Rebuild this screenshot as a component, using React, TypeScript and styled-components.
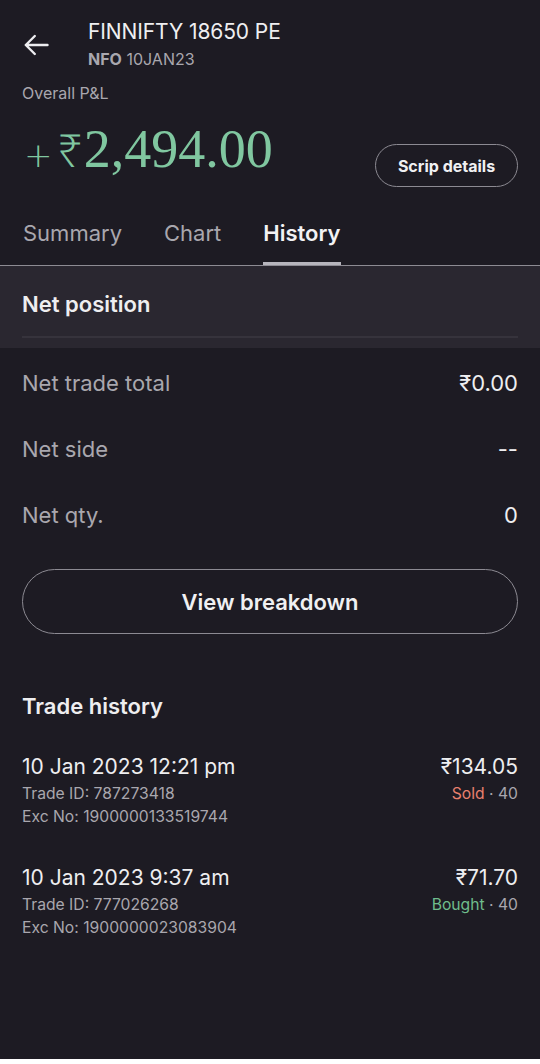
import React from "react";
import styled, { createGlobalStyle } from "styled-components";

const Global = createGlobalStyle`
  html, body { margin: 0; padding: 0; background: #ffffff; }
  * { box-sizing: border-box; }
`;

const Screen = styled.div`
  width: 540px;
  height: 1059px;
  background: #1d1b23;
  font-family: Inter, "Noto Sans", sans-serif;
  color: #ededf0;
  overflow: hidden;
`;

const Header = styled.header`
  display: flex;
  align-items: center;
  padding: 19px 22px 0 24px;
  gap: 39px;
`;

const BackButton = styled.button`
  background: none;
  border: none;
  padding: 0;
  width: 25px;
  height: 22px;
  color: #ededf0;
  display: flex;
  align-items: center;
  margin-top: 2px;
`;

const TitleBlock = styled.div`
  display: flex;
  flex-direction: column;
  gap: 4px;
`;

const Title = styled.div`
  font-size: 21px;
  line-height: 26px;
  color: #efeff1;
  letter-spacing: -0.1px;
`;

const Sub = styled.div`
  font-size: 16px;
  line-height: 20px;
  color: #a9a7ae;
  b { font-weight: 700; }
`;

const Label = styled.div`
  padding: 14px 22px 0;
  font-size: 16px;
  line-height: 20px;
  color: #a9a7ae;
`;

const PnlRow = styled.div`
  display: flex;
  align-items: flex-start;
  justify-content: space-between;
  padding: 13px 22px 0 24px;
`;

const Amount = styled.div`
  font-family: "Liberation Serif", "DejaVu Serif", serif;
  font-size: 54px;
  line-height: 66px;
  color: #80c7a0;
  display: flex;
  align-items: baseline;
`;

const Plus = styled.span`
  font-family: "DejaVu Sans", sans-serif;
  font-weight: 200;
  font-size: 34px;
  margin-right: 5px;
`;

const Rupee = styled.span`
  font-family: "Noto Sans", sans-serif;
  font-weight: 300;
  font-size: 44px;
  margin-right: 1px;
`;

const PillButton = styled.button`
  background: transparent;
  border: 1px solid #8c8a92;
  border-radius: 999px;
  color: #f0f0f2;
  font-family: Inter, "Noto Sans", sans-serif;
  font-weight: 700;
  font-size: 16px;
  height: 43px;
  width: 143px;
  padding: 0;
  margin-top: 28px;
`;

const Tabs = styled.nav`
  display: flex;
  gap: 42px;
  padding: 31px 22px 0 23px;
  border-bottom: 1px solid #8d8b93;
`;

const Tab = styled.div<{ $active?: boolean }>`
  font-size: 22px;
  line-height: 28px;
  font-weight: ${(p) => (p.$active ? 600 : 400)};
  color: ${(p) => (p.$active ? "#f2f2f4" : "#a9a7ae")};
  padding-bottom: 18px;
  position: relative;
  &::after {
    content: "";
    display: ${(p) => (p.$active ? "block" : "none")};
    position: absolute;
    left: 0;
    right: 0;
    bottom: 0;
    height: 3px;
    background: #b7b5bd;
  }
`;

const SectionBand = styled.div`
  background: #2a2730;
  padding: 25px 22px 0;
`;

const BandTitle = styled.div`
  font-size: 22px;
  line-height: 26px;
  font-weight: 600;
  color: #eeeef0;
  padding-bottom: 19px;
  border-bottom: 2px solid #36333c;
`;

const BandSpacer = styled.div`
  height: 10px;
`;

const Rows = styled.div`
  display: flex;
  flex-direction: column;
  padding: 22px 22px 0;
  gap: 40px;
`;

const Row = styled.div`
  display: flex;
  justify-content: space-between;
  align-items: center;
  font-size: 22px;
  line-height: 26px;
`;

const RowLabel = styled.span`
  color: #a9a7ae;
`;

const RowValue = styled.span`
  color: #eeeef0;
`;

const WideButton = styled.button`
  display: block;
  margin: 41px 22px 0;
  width: calc(100% - 44px);
  height: 65px;
  background: transparent;
  border: 1px solid #8c8a92;
  border-radius: 33px;
  color: #f0f0f2;
  font-family: Inter, "Noto Sans", sans-serif;
  font-size: 22px;
  font-weight: 600;
`;

const SectionTitle = styled.div`
  padding: 59px 22px 0;
  font-size: 22px;
  line-height: 26px;
  font-weight: 600;
  color: #eeeef0;
`;

const Trades = styled.div`
  display: flex;
  flex-direction: column;
  gap: 37px;
  padding: 35px 22px 0;
`;

const Trade = styled.div`
  display: flex;
  justify-content: space-between;
`;

const Col = styled.div<{ $right?: boolean }>`
  display: flex;
  flex-direction: column;
  align-items: ${(p) => (p.$right ? "flex-end" : "flex-start")};
`;

const Main = styled.div`
  font-size: 21px;
  line-height: 26px;
  color: #eeeef0;
  margin-bottom: 2px;
`;

const Meta = styled.div`
  font-size: 15.7px;
  line-height: 23px;
  color: #a9a7ae;
`;

const Side = styled.span<{ $kind: "sell" | "buy" }>`
  color: ${(p) => (p.$kind === "sell" ? "#e8806e" : "#6fbd8c")};
`;

const trades = [
  {
    date: "10 Jan 2023 12:21 pm",
    tradeId: "787273418",
    exc: "1900000133519744",
    price: "₹134.05",
    side: "Sold",
    kind: "sell" as const,
    qty: 40,
  },
  {
    date: "10 Jan 2023 9:37 am",
    tradeId: "777026268",
    exc: "1900000023083904",
    price: "₹71.70",
    side: "Bought",
    kind: "buy" as const,
    qty: 40,
  },
];

export default function App() {
  return (
    <>
      <Global />
      <Screen>
        <Header>
          <BackButton aria-label="Back">
            <svg width="25" height="22" viewBox="0 0 25 22" fill="none">
              <path
                d="M23.5 11H1.8M10.8 2L1.8 11L10.8 20"
                stroke="#ededf0"
                strokeWidth="2.4"
                strokeLinecap="round"
                strokeLinejoin="round"
              />
            </svg>
          </BackButton>
          <TitleBlock>
            <Title>FINNIFTY 18650 PE</Title>
            <Sub>
              <b>NFO</b> 10JAN23
            </Sub>
          </TitleBlock>
        </Header>
        <Label>Overall P&amp;L</Label>
        <PnlRow>
          <Amount>
            <Plus>+</Plus>
            <Rupee>₹</Rupee>2,494.00
          </Amount>
          <PillButton>Scrip details</PillButton>
        </PnlRow>
        <Tabs>
          <Tab>Summary</Tab>
          <Tab>Chart</Tab>
          <Tab $active>History</Tab>
        </Tabs>
        <SectionBand>
          <BandTitle>Net position</BandTitle>
          <BandSpacer />
        </SectionBand>
        <Rows>
          <Row>
            <RowLabel>Net trade total</RowLabel>
            <RowValue>₹0.00</RowValue>
          </Row>
          <Row>
            <RowLabel>Net side</RowLabel>
            <RowValue>--</RowValue>
          </Row>
          <Row>
            <RowLabel>Net qty.</RowLabel>
            <RowValue>0</RowValue>
          </Row>
        </Rows>
        <WideButton>View breakdown</WideButton>
        <SectionTitle>Trade history</SectionTitle>
        <Trades>
          {trades.map((t) => (
            <Trade key={t.tradeId}>
              <Col>
                <Main>{t.date}</Main>
                <Meta>Trade ID: {t.tradeId}</Meta>
                <Meta>Exc No: {t.exc}</Meta>
              </Col>
              <Col $right>
                <Main>{t.price}</Main>
                <Meta>
                  <Side $kind={t.kind}>{t.side}</Side> · {t.qty}
                </Meta>
              </Col>
            </Trade>
          ))}
        </Trades>
      </Screen>
    </>
  );
}
